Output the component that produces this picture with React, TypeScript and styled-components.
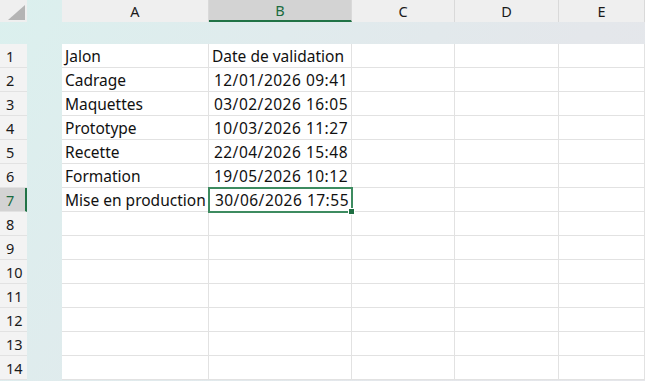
import * as React from "react";
import styled, { createGlobalStyle, css } from "styled-components";

const GlobalStyle = createGlobalStyle`
  html, body {
    margin: 0;
    padding: 0;
    background: #ffffff;
  }
  * {
    box-sizing: border-box;
  }
`;

const COLUMNS = ["A", "B", "C", "D", "E"];
const ROW_COUNT = 14;
const SELECTED_COL = 1;
const SELECTED_ROW = 7;

const rows: string[][] = [
  ["Jalon", "Date de validation"],
  ["Cadrage", "12/01/2026 09:41"],
  ["Maquettes", "03/02/2026 16:05"],
  ["Prototype", "10/03/2026 11:27"],
  ["Recette", "22/04/2026 15:48"],
  ["Formation", "19/05/2026 10:12"],
  ["Mise en production", "30/06/2026 17:55"]
];

const TRACKS = "27px 35px 147px 143px 103px 104px 1fr";

const Sheet = styled.div`
  display: flex;
  flex-direction: column;
  width: 645px;
  height: 381px;
  overflow: hidden;
  background: linear-gradient(120deg, #dbf0ee 0%, #e0ebed 35%, #e4e7eb 70%, #e5e6ea 100%);
  font-family: "Noto Sans", "Liberation Sans", sans-serif;
  color: #1f1f1f;
`;

const HeaderRow = styled.div`
  display: grid;
  grid-template-columns: ${TRACKS};
  height: 19px;
`;

const Band = styled.div`
  height: 25px;
  flex-shrink: 0;
`;

const Row = styled.div`
  display: grid;
  grid-template-columns: ${TRACKS};
  height: 24px;
  flex-shrink: 0;
`;

const Spacer = styled.div``;

const Corner = styled.div`
  background: #efefef;
  position: relative;

  &::after {
    content: "";
    position: absolute;
    right: 2px;
    bottom: 2px;
    width: 0;
    height: 0;
    border-left: 17px solid transparent;
    border-bottom: 15px solid #b4b4b4;
  }
`;

const ColHeader = styled.div<{ $selected?: boolean }>`
  display: flex;
  align-items: center;
  justify-content: center;
  font-size: 14.5px;
  background: #efefef;
  border-right: 1px solid #d9d9d9;
  color: #1a1a1a;
  ${({ $selected }) =>
    $selected &&
    css`
      background: #d3d3d3;
      color: #1b6b3f;
      border-bottom: 2px solid #217346;
    `}
`;

const RowHeader = styled.div<{ $selected?: boolean }>`
  display: flex;
  align-items: center;
  padding-left: 6px;
  font-size: 14.5px;
  background: #f3f3f3;
  border-bottom: 1px solid #e2e2e2;
  color: #1a1a1a;
  ${({ $selected }) =>
    $selected &&
    css`
      background: #d3d3d3;
      color: #1b6b3f;
      border-right: 2px solid #217346;
    `}
`;

const Cell = styled.div<{ $numeric?: boolean }>`
  display: flex;
  align-items: center;
  justify-content: ${({ $numeric }) => ($numeric ? "flex-end" : "flex-start")};
  padding: 0 3px 0 3px;
  background: #ffffff;
  border-right: 1px solid #e2e2e2;
  border-bottom: 1px solid #e2e2e2;
  font-size: 15.5px;
  white-space: nowrap;
  letter-spacing: ${({ $numeric }) => ($numeric ? "0.5px" : "0")};
  color: #111111;
`;

const ActiveCell = styled(Cell)`
  position: relative;
  z-index: 1;
  border: none;
  outline: 2px solid #3d8b60;
  outline-offset: -1px;

  &::after {
    content: "";
    position: absolute;
    right: -3px;
    bottom: -3px;
    width: 5px;
    height: 5px;
    background: #1e6e42;
    border: 1px solid #ffffff;
  }
`;

const isDate = (v: string) => /^\d{2}\/\d{2}\/\d{4}/.test(v);

export default function App() {
  return (
    <>
      <GlobalStyle />
      <Sheet>
        <HeaderRow>
          <Corner />
          <Spacer />
          {COLUMNS.map((c, i) => (
            <ColHeader key={c} $selected={i === SELECTED_COL}>
              {c}
            </ColHeader>
          ))}
        </HeaderRow>
        <Band />
        {Array.from({ length: ROW_COUNT }, (_, r) => {
          const rowNum = r + 1;
          return (
            <Row key={rowNum}>
              <RowHeader $selected={rowNum === SELECTED_ROW}>{rowNum}</RowHeader>
              <Spacer />
              {COLUMNS.map((c, ci) => {
                const value = rows[r] ? rows[r][ci] ?? "" : "";
                const active = rowNum === SELECTED_ROW && ci === SELECTED_COL;
                const Comp = active ? ActiveCell : Cell;
                return (
                  <Comp key={c} $numeric={isDate(value)}>
                    {value}
                  </Comp>
                );
              })}
            </Row>
          );
        })}
      </Sheet>
    </>
  );
}
